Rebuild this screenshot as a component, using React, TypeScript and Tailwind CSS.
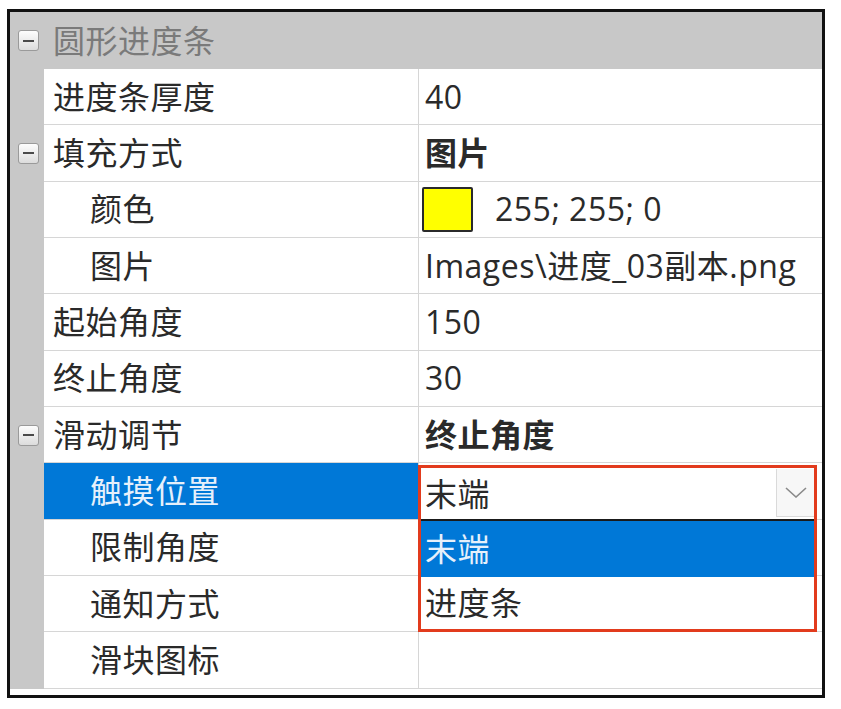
import React from "react";

type Row = {
  name: string;
  value?: string;
  indent?: boolean;
  group?: boolean;
  bold?: boolean;
  swatch?: boolean;
  selected?: boolean;
  combo?: boolean;
};

const rows: Row[] = [
  { name: "进度条厚度", value: "40" },
  { name: "填充方式", value: "图片", group: true, bold: true },
  { name: "颜色", value: "255; 255; 0", indent: true, swatch: true },
  { name: "图片", value: "Images\\进度_03副本.png", indent: true },
  { name: "起始角度", value: "150" },
  { name: "终止角度", value: "30" },
  { name: "滑动调节", value: "终止角度", group: true, bold: true },
  { name: "触摸位置", indent: true, selected: true, combo: true },
  { name: "限制角度", indent: true },
  { name: "通知方式", indent: true },
  { name: "滑块图标", indent: true },
];

function MinusBox() {
  return (
    <div className="w-[21px] h-[21px] rounded-[3px] border border-[#9a9a9a] bg-gradient-to-b from-[#fdfdfd] to-[#dcdcdc] flex items-center justify-center">
      <div className="w-[11px] h-[2px] bg-[#4a4a4a]" />
    </div>
  );
}

function Combo() {
  return (
    <div className="absolute left-[-1px] top-[2px] w-[399px] h-[167px] border-[3px] border-[#e23b1d] flex flex-col z-10">
      <div className="h-[51px] bg-white flex items-center justify-between">
        <span className="pl-[4px] text-[#2a2a2a]">末端</span>
        <div className="w-[38px] h-[48px] mt-[1px] self-start bg-[#f7f7f7] border-l border-b border-[#dadada] flex items-center justify-center">
          <svg width="22" height="11" viewBox="0 0 22 11">
            <polyline points="1,1 11,10 21,1" fill="none" stroke="#8a8a8a" strokeWidth="1.6" />
          </svg>
        </div>
      </div>
      <div className="border-t-2 border-[#1a1a1a] flex-1 flex flex-col">
        <div className="h-[56px] bg-[#0078d7] text-[#e6f0fb] flex items-center pl-[4px]">末端</div>
        <div className="flex-1 bg-white text-[#2a2a2a] flex items-center pl-[4px]">进度条</div>
      </div>
    </div>
  );
}

export default function App() {
  return (
    <div className="w-[841px] h-[709px] bg-white pt-[9px] pl-[7px]">
      <div
        className="w-[818px] h-[689px] border-[3px] border-[#111] bg-white text-[32px] tracking-[0.5px] leading-none"
        style={{ fontFamily: '"Open Sans", "Noto Sans CJK SC", sans-serif' }}
      >
        <div className="h-[57px] bg-[#c8c8c8] flex items-center">
          <div className="w-[34px] flex justify-center pl-[2px]">
            <MinusBox />
          </div>
          <span className="pl-[9px] text-[#7a7a7a]">圆形进度条</span>
        </div>
        {rows.map((r) => (
          <div key={r.name} className="flex h-[56.33px]">
            <div className="w-[34px] bg-[#c8c8c8] flex items-center justify-center pl-[2px]">
              {r.group && <MinusBox />}
            </div>
            <div
              className={
                "w-[375px] flex items-center border-b border-r border-[#d6d6d6] " +
                (r.indent ? "pl-[46px] " : "pl-[9px] ") +
                (r.selected ? "bg-[#0078d7] text-[#e6f0fb]" : "text-[#2a2a2a]")
              }
            >
              {r.name}
            </div>
            <div className="relative flex-1 flex items-center border-b border-[#d6d6d6] pl-[6px] text-[#2a2a2a]">
              {r.swatch && (
                <div className="w-[51px] h-[45px] bg-[#ffff00] border-2 border-[#2a2a2a] rounded-[2px] mr-[22px] -ml-[3px]" />
              )}
              {r.value && <span className={r.bold ? "font-bold" : ""}>{r.value}</span>}
              {r.combo && <Combo />}
            </div>
          </div>
        ))}
      </div>
    </div>
  );
}
